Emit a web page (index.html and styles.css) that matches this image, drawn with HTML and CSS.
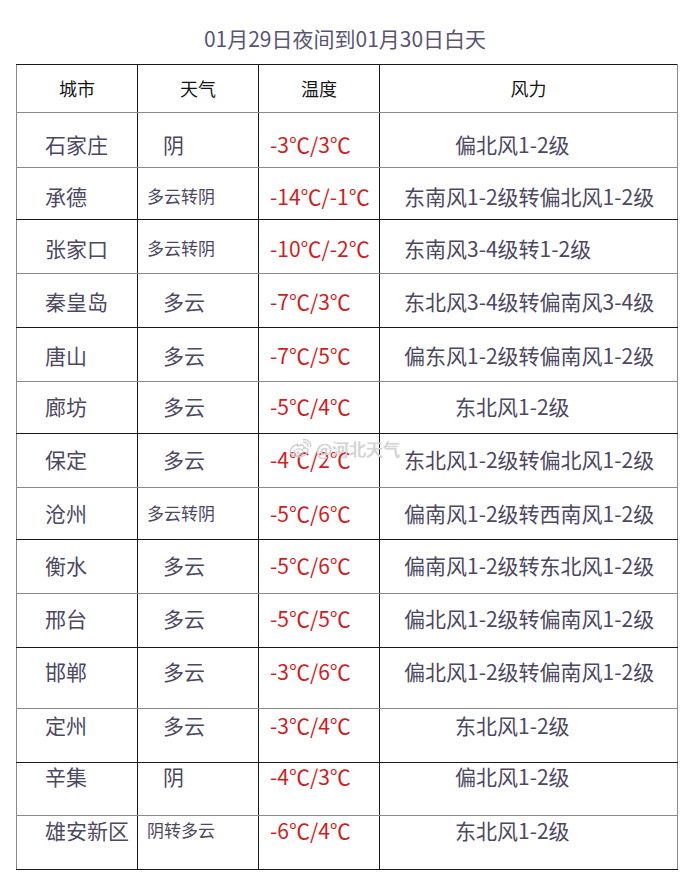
FILE: index.html
```html
<!DOCTYPE html>
<html lang="zh-CN">
<head>
<meta charset="utf-8">
<title>01月29日夜间到01月30日白天</title>
<link rel="stylesheet" href="styles.css">
</head>
<body>
<div class="page">
  <h1 class="title">01月29日夜间到01月30日白天</h1>
  <div class="board">
    <table class="weather">
      <colgroup>
        <col class="c-city"><col class="c-wx"><col class="c-temp"><col class="c-wind">
      </colgroup>
      <thead>
        <tr><th>城市</th><th>天气</th><th>温度</th><th>风力</th></tr>
      </thead>
      <tbody>
        <tr><td class="city">石家庄</td><td class="wx">阴</td><td class="temp">-3℃/3℃</td><td class="wind short">偏北风1-2级</td></tr>
        <tr><td class="city">承德</td><td class="wx sm">多云转阴</td><td class="temp">-14℃/-1℃</td><td class="wind">东南风1-2级转偏北风1-2级</td></tr>
        <tr><td class="city">张家口</td><td class="wx sm">多云转阴</td><td class="temp">-10℃/-2℃</td><td class="wind">东南风3-4级转1-2级</td></tr>
        <tr><td class="city">秦皇岛</td><td class="wx">多云</td><td class="temp">-7℃/3℃</td><td class="wind">东北风3-4级转偏南风3-4级</td></tr>
        <tr><td class="city">唐山</td><td class="wx">多云</td><td class="temp">-7℃/5℃</td><td class="wind">偏东风1-2级转偏南风1-2级</td></tr>
        <tr><td class="city">廊坊</td><td class="wx">多云</td><td class="temp">-5℃/4℃</td><td class="wind short">东北风1-2级</td></tr>
        <tr><td class="city">保定</td><td class="wx">多云</td><td class="temp">-4℃/2℃</td><td class="wind">东北风1-2级转偏北风1-2级</td></tr>
        <tr><td class="city">沧州</td><td class="wx sm">多云转阴</td><td class="temp">-5℃/6℃</td><td class="wind">偏南风1-2级转西南风1-2级</td></tr>
        <tr><td class="city">衡水</td><td class="wx">多云</td><td class="temp">-5℃/6℃</td><td class="wind">偏南风1-2级转东北风1-2级</td></tr>
        <tr><td class="city">邢台</td><td class="wx">多云</td><td class="temp">-5℃/5℃</td><td class="wind">偏北风1-2级转偏南风1-2级</td></tr>
        <tr><td class="city">邯郸</td><td class="wx">多云</td><td class="temp">-3℃/6℃</td><td class="wind">偏北风1-2级转偏南风1-2级</td></tr>
        <tr><td class="city">定州</td><td class="wx">多云</td><td class="temp">-3℃/4℃</td><td class="wind short">东北风1-2级</td></tr>
        <tr><td class="city">辛集</td><td class="wx">阴</td><td class="temp">-4℃/3℃</td><td class="wind short">偏北风1-2级</td></tr>
        <tr><td class="city">雄安新区</td><td class="wx sm">阴转多云</td><td class="temp">-6℃/4℃</td><td class="wind short">东北风1-2级</td></tr>
      </tbody>
    </table>
    <div class="watermark">
      <svg class="wm-logo" viewBox="0 0 24 20" width="24" height="20" aria-hidden="true">
        <path d="M9.5 5.2C5.2 6.6 1.5 10 2.2 13.4c.7 3.4 5.6 5.2 10.6 4.2 5-1 8-4.2 7.2-7-.5-1.8-2.6-2-4.2-1.2.8-2.2-.2-3.6-2.4-3.4-1.1.1-2.4.6-3.9 1.2z" fill="none" stroke="#cbcbcb" stroke-width="1.3"/>
        <ellipse cx="10.5" cy="13.2" rx="4.6" ry="3.2" fill="none" stroke="#cbcbcb" stroke-width="1.1" transform="rotate(-12 10.5 13.2)"/>
        <circle cx="9.8" cy="13.6" r="1.3" fill="#cbcbcb"/>
        <path d="M15.6 3.2c2.6-.4 4.6 1.6 4.3 4" fill="none" stroke="#cbcbcb" stroke-width="1.2" stroke-linecap="round"/>
        <path d="M15.2 0.8c4.4-.8 8 2.6 7.3 6.8" fill="none" stroke="#cbcbcb" stroke-width="1.2" stroke-linecap="round"/>
      </svg>
      <span class="wm-text">@河北天气</span>
    </div>
  </div>
</div>
</body>
</html>
```

FILE: styles.css
```css
* { box-sizing: border-box; }

html, body {
  margin: 0;
  padding: 0;
  background: #ffffff;
}

body {
  font-family: "Noto Sans CJK SC", "Liberation Sans", sans-serif;
}

.page {
  position: relative;
  width: 690px;
  height: 892px;
  overflow: hidden;
}

.title {
  margin: 0;
  height: 64px;
  padding-top: 23px;
  font-size: 21px;
  font-weight: 400;
  line-height: 30px;
  text-align: center;
  color: #5a5472;
}

.board {
  position: relative;
  margin-left: 16px;
  width: 661px;
}

.weather {
  border-collapse: collapse;
  table-layout: fixed;
  width: 661px;
}

.c-city, .c-wx, .c-temp { width: 121px; }
.c-wind { width: 298px; }

.weather th {
  font-size: 18px;
  font-weight: 400;
  line-height: 24px;
  color: #151515;
  text-align: center;
  padding: 11px 0 12px;
  border: 1px solid #1a1a1a;
  border-bottom-color: #8a8a8a;
}

.weather td {
  font-size: 21px;
  line-height: 24px;
  color: #4d4862;
  white-space: nowrap;
  vertical-align: top;
  padding: 0;
  border: 1px solid #1a1a1a;
}

.weather th:first-child,
.weather td:first-child { border-left-color: #8a8a8a; }
.weather th:last-child,
.weather td:last-child { border-right-color: #8a8a8a; }

.weather tbody tr:nth-child(odd) td { border-bottom-color: #8a8a8a; }
.weather tbody tr:last-child td { border-bottom-color: #1a1a1a; }

/* row vertical rhythm */
.weather tbody tr:nth-child(1) td  { padding-top: 19px; padding-bottom: 11px; }
.weather tbody tr:nth-child(2) td  { padding-top: 16px; padding-bottom: 11px; }
.weather tbody tr:nth-child(3) td  { padding-top: 16px; padding-bottom: 13px; }
.weather tbody tr:nth-child(4) td  { padding-top: 15px; padding-bottom: 14px; }
.weather tbody tr:nth-child(5) td  { padding-top: 15px; padding-bottom: 14px; }
.weather tbody tr:nth-child(6) td  { padding-top: 12px; padding-bottom: 15px; }
.weather tbody tr:nth-child(7) td  { padding-top: 13px; padding-bottom: 16px; }
.weather tbody tr:nth-child(8) td  { padding-top: 13px; padding-bottom: 14px; }
.weather tbody tr:nth-child(9) td  { padding-top: 13px; padding-bottom: 16px; }
.weather tbody tr:nth-child(10) td { padding-top: 12px; padding-bottom: 17px; }
.weather tbody tr:nth-child(11) td { padding-top: 11px; padding-bottom: 25px; }
.weather tbody tr:nth-child(12) td { padding-top: 4px;  padding-bottom: 25px; }
.weather tbody tr:nth-child(13) td { padding-top: 1px;  padding-bottom: 27px; }
.weather tbody tr:nth-child(14) td { padding-top: 2px;  padding-bottom: 27px; }

.weather td.city { padding-left: 28px; }
.weather td.wx { padding-left: 25px; }
.weather td.wx.sm { padding-left: 9px; font-size: 17px; }
.weather td.temp { padding-left: 11px; color: #d21c22; }
.weather td.wind { padding-left: 24px; }
.weather td.wind.short { padding-left: 75px; }

.watermark {
  position: absolute;
  left: 272px;
  top: 374px;
  display: flex;
  align-items: center;
  gap: 4px;
  pointer-events: none;
}

.wm-text {
  font-size: 17px;
  line-height: 22px;
  color: #d6d6d6;
  text-shadow: 0 0 1px #b8b8b8;
}
```
